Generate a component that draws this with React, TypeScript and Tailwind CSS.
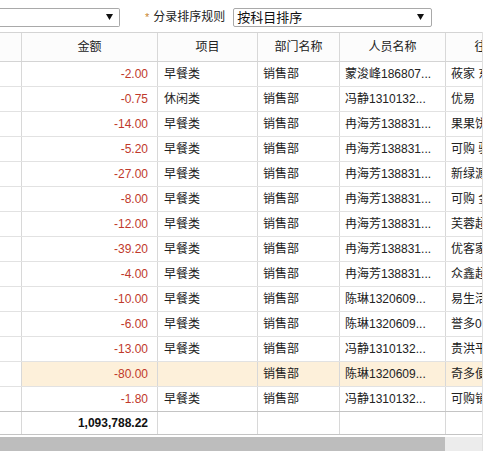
import React from "react"

type Row = {
  amount: string
  item: string
  dept: string
  person: string
  partner: string
  active?: boolean
}

const rows: Row[] = [
  { amount: "-2.00", item: "早餐类", dept: "销售部", person: "蒙浚峰186807...", partner: "莜家 东方便利店" },
  { amount: "-0.75", item: "休闲类", dept: "销售部", person: "冯静1310132...", partner: "优易" },
  { amount: "-14.00", item: "早餐类", dept: "销售部", person: "冉海芳138831...", partner: "果果饼屋" },
  { amount: "-5.20", item: "早餐类", dept: "销售部", person: "冉海芳138831...", partner: "可购 驿站" },
  { amount: "-27.00", item: "早餐类", dept: "销售部", person: "冉海芳138831...", partner: "新绿源超市" },
  { amount: "-8.00", item: "早餐类", dept: "销售部", person: "冉海芳138831...", partner: "可购 金地" },
  { amount: "-12.00", item: "早餐类", dept: "销售部", person: "冉海芳138831...", partner: "芙蓉超市" },
  { amount: "-39.20", item: "早餐类", dept: "销售部", person: "冉海芳138831...", partner: "优客家便利" },
  { amount: "-4.00", item: "早餐类", dept: "销售部", person: "冉海芳138831...", partner: "众鑫超市" },
  { amount: "-10.00", item: "早餐类", dept: "销售部", person: "陈琳1320609...", partner: "易生活" },
  { amount: "-6.00", item: "早餐类", dept: "销售部", person: "陈琳1320609...", partner: "誉多0" },
  { amount: "-13.00", item: "早餐类", dept: "销售部", person: "冯静1310132...", partner: "贵洪平" },
  { amount: "-80.00", item: "", dept: "销售部", person: "陈琳1320609...", partner: "奇多便利", active: true },
  { amount: "-1.80", item: "早餐类", dept: "销售部", person: "冯静1310132...", partner: "可购销售" },
]

function Arrow() {
  return (
    <svg width="7" height="6" viewBox="0 0 7 6" className="shrink-0">
      <path d="M0 0 H7 L3.5 6 Z" fill="#111" />
    </svg>
  )
}

export default function App() {
  return (
    <div
      className="w-[486px] h-[467px] bg-white text-[12px] text-[#222] overflow-hidden"
      style={{ fontFamily: '"Liberation Sans", "Noto Sans CJK SC", sans-serif' }}
    >
      {/* Toolbar */}
      <div className="h-[32px] flex items-center pt-[2px]">
        <div className="w-[120px] h-[19px] flex items-center justify-end pr-[6px] border-y border-r border-[#a9a9a9] rounded-r-[2px] bg-white">
          <Arrow />
        </div>
        <span className="ml-[25px] text-[#c9862f] text-[11px] leading-none">*</span>
        <span className="ml-[4px] text-[12px] text-[#222]">分录排序规则</span>
        <div className="ml-[8px] w-[199px] h-[19px] flex items-center justify-between pl-[3px] pr-[7px] border border-[#a9a9a9] rounded-[2px] bg-white">
          <span className="text-[13px] leading-none text-[#111]">按科目排序</span>
          <Arrow />
        </div>
      </div>

      {/* Grid */}
      <div className="w-[483px] overflow-hidden border-r border-[#e0e0e0]">
        <div className="w-[600px]">
          {/* Header */}
          <div className="flex h-[30px] border-t border-b border-[#d4d4d4] bg-[#fcfcfc] text-[12px] text-[#222]">
            <div className="w-[22px] shrink-0 border-r border-[#d8d8d8]" />
            <div className="w-[136px] shrink-0 border-r border-[#d8d8d8] flex items-center justify-center">金额</div>
            <div className="w-[100px] shrink-0 border-r border-[#d8d8d8] flex items-center justify-center">项目</div>
            <div className="w-[82px] shrink-0 border-r border-[#d8d8d8] flex items-center justify-center">部门名称</div>
            <div className="w-[106px] shrink-0 border-r border-[#d8d8d8] flex items-center justify-center">人员名称</div>
            <div className="w-[130px] shrink-0 border-r border-[#d8d8d8] flex items-center justify-center whitespace-nowrap">往来单位名称</div>
          </div>

          {/* Rows */}
          {rows.map((r, i) => (
            <div key={i} className={`flex h-[25px] border-b border-[#e2e2e2] ${r.active ? "bg-[#fdf0da]" : "bg-white"}`}>
              <div className="w-[22px] shrink-0 border-r border-[#d8d8d8] bg-white" />
              <div className="w-[136px] shrink-0 border-r border-[#d8d8d8] flex items-center justify-end pr-[9px] text-[#c0392b]">
                {r.amount}
              </div>
              <div className="w-[100px] shrink-0 border-r border-[#d8d8d8] flex items-center pl-[6px]">{r.item}</div>
              <div className="w-[82px] shrink-0 border-r border-[#d8d8d8] flex items-center pl-[5px]">{r.dept}</div>
              <div className="w-[106px] shrink-0 border-r border-[#d8d8d8] flex items-center pl-[5px] whitespace-nowrap">{r.person}</div>
              <div className="w-[130px] shrink-0 border-r border-[#d8d8d8] flex items-center pl-[5px] whitespace-nowrap overflow-hidden">{r.partner}</div>
            </div>
          ))}

          {/* Total */}
          <div className="flex h-[24px] border-t border-b border-[#c4c4c4] bg-white -mt-px">
            <div className="w-[22px] shrink-0 border-r border-[#d8d8d8]" />
            <div className="w-[136px] shrink-0 border-r border-[#d8d8d8] flex items-center justify-end pr-[9px] font-bold text-[#111]">
              1,093,788.22
            </div>
            <div className="w-[100px] shrink-0 border-r border-[#d8d8d8]" />
            <div className="w-[82px] shrink-0 border-r border-[#d8d8d8]" />
            <div className="w-[106px] shrink-0 border-r border-[#d8d8d8]" />
            <div className="w-[130px] shrink-0 border-r border-[#d8d8d8]" />
          </div>
        </div>

        {/* Horizontal scrollbar */}
        <div className="flex h-[14px] mt-[2px] bg-[#ececec]">
          <div className="w-[445px] bg-[#bdbdbd]" />
        </div>
      </div>
    </div>
  )
}
